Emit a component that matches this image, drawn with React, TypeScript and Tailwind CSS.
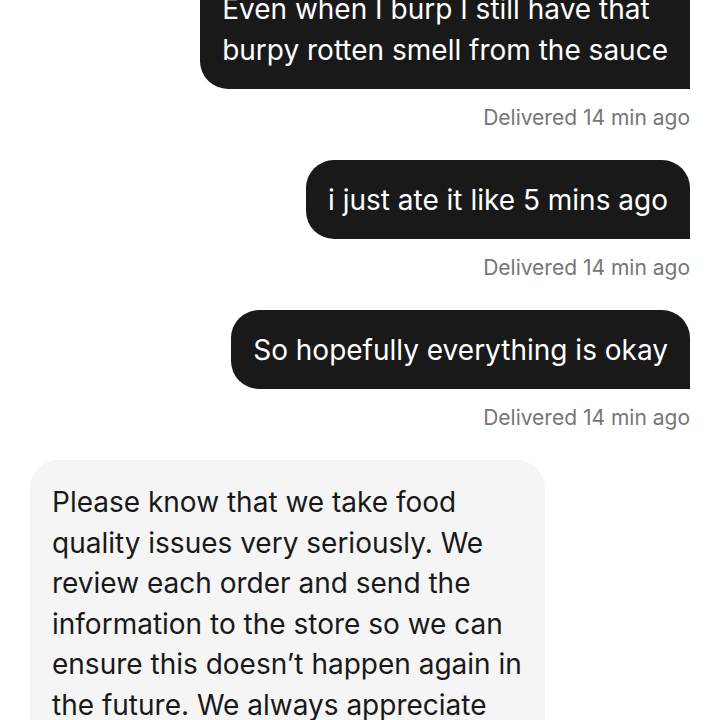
const font = { fontFamily: "Inter, 'Noto Sans', sans-serif" };

type Sent = { lines: string[] };

const sent: Sent[] = [
  { lines: ["Even when I burp I still have that", "burpy rotten smell from the sauce"] },
  { lines: ["i just ate it like 5 mins ago"] },
  { lines: ["So hopefully everything is okay"] },
];

const reply = [
  "Please know that we take food",
  "quality issues very seriously. We",
  "review each order and send the",
  "information to the store so we can",
  "ensure this doesn\u2019t happen again in",
  "the future. We always appreciate",
  "your feedback.",
];

function SentBubble({ lines }: Sent) {
  return (
    <div className="flex flex-col items-end">
      <div className="rounded-[28px] rounded-br-none bg-[#191919] px-[22px] pt-[20px] pb-[18px] text-[28px] leading-[41px] text-white">
        {lines.map((l) => (
          <div key={l} className="whitespace-nowrap">
            {l}
          </div>
        ))}
      </div>
      <p className="mt-[15px] mb-[28px] text-[21px] leading-[28px] text-[#767676]">Delivered 14 min ago</p>
    </div>
  );
}

export default function App() {
  return (
    <div className="h-[720px] w-[720px] overflow-hidden bg-white px-[30px]" style={font}>
      <div className="-mt-[31px] flex flex-col">
        {sent.map((m, i) => (
          <SentBubble key={i} lines={m.lines} />
        ))}
        <div className="w-[515px] rounded-[28px] rounded-bl-none bg-[#f5f5f5] px-[22px] pt-[22px] pb-[18px] text-[28px] leading-[40.5px] text-[#191919]">
          {reply.map((l) => (
            <div key={l} className="whitespace-nowrap">
              {l}
            </div>
          ))}
        </div>
      </div>
    </div>
  );
}
